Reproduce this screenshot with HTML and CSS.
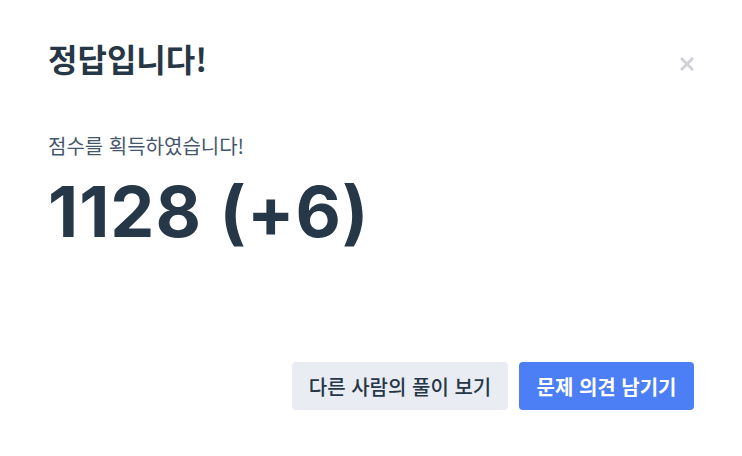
FILE: index.html
```html
<!DOCTYPE html>
<html lang="ko">
<head>
<meta charset="utf-8">
<link rel="stylesheet" href="styles.css">
</head>
<body>
<div class="modal">
  <div class="modal-header">
    <h2 class="modal-title">정답입니다!</h2>
    <button class="close" aria-label="닫기">
      <svg width="14" height="14" viewBox="0 0 14 14"><path d="M2 2L12 12M12 2L2 12" stroke="#cfd2d6" stroke-width="3" stroke-linecap="square"/></svg>
    </button>
  </div>
  <div class="modal-body">
    <p class="label">점수를 획득하였습니다!</p>
    <div class="score">1128 (+6)</div>
  </div>
  <div class="modal-footer">
    <button class="btn btn-light">다른 사람의 풀이 보기</button>
    <button class="btn btn-primary">문제 의견 남기기</button>
  </div>
</div>
</body>
</html>
```
FILE: styles.css
```css
html, body {
  margin: 0;
  padding: 0;
  background: #ffffff;
}
body {
  width: 742px;
  height: 456px;
  font-family: "Noto Sans CJK KR", "Noto Sans", sans-serif;
  color: #263747;
}
.modal {
  box-sizing: border-box;
  height: 456px;
  padding: 34px 48px 46px 48px;
  display: flex;
  flex-direction: column;
}
.modal-header {
  display: flex;
  justify-content: space-between;
  align-items: center;
}
.modal-title {
  margin: 0;
  font-size: 32px;
  font-weight: 700;
  line-height: 48px;
  color: #263747;
}
.close {
  border: 0;
  background: none;
  padding: 0;
  width: 14px;
  height: 14px;
  display: flex;
  margin-top: 12px;
}
.modal-body {
  padding-top: 50px;
  flex: 1;
}
.label {
  margin: 0;
  font-size: 20px;
  font-weight: 400;
  line-height: 28px;
  color: #44576c;
}
.score {
  font-family: Inter, "Noto Sans CJK KR", sans-serif;
  font-size: 70px;
  font-weight: 700;
  line-height: 80px;
  margin-top: 12px;
  letter-spacing: 1px;
  color: #263747;
}
.modal-footer {
  display: flex;
  justify-content: flex-end;
  gap: 11px;
}
.btn {
  font-family: "Noto Sans CJK KR", sans-serif;
  font-size: 20px;
  font-weight: 500;
  height: 48px;
  padding: 0 16px;
  border: 0;
  border-radius: 4px;
}
.btn-light {
  background: #e9ecf3;
  color: #263747;
  width: 216px;
}
.btn-primary {
  background: #4c7ef6;
  color: #ffffff;
  font-weight: 700;
  width: 175px;
}
```
